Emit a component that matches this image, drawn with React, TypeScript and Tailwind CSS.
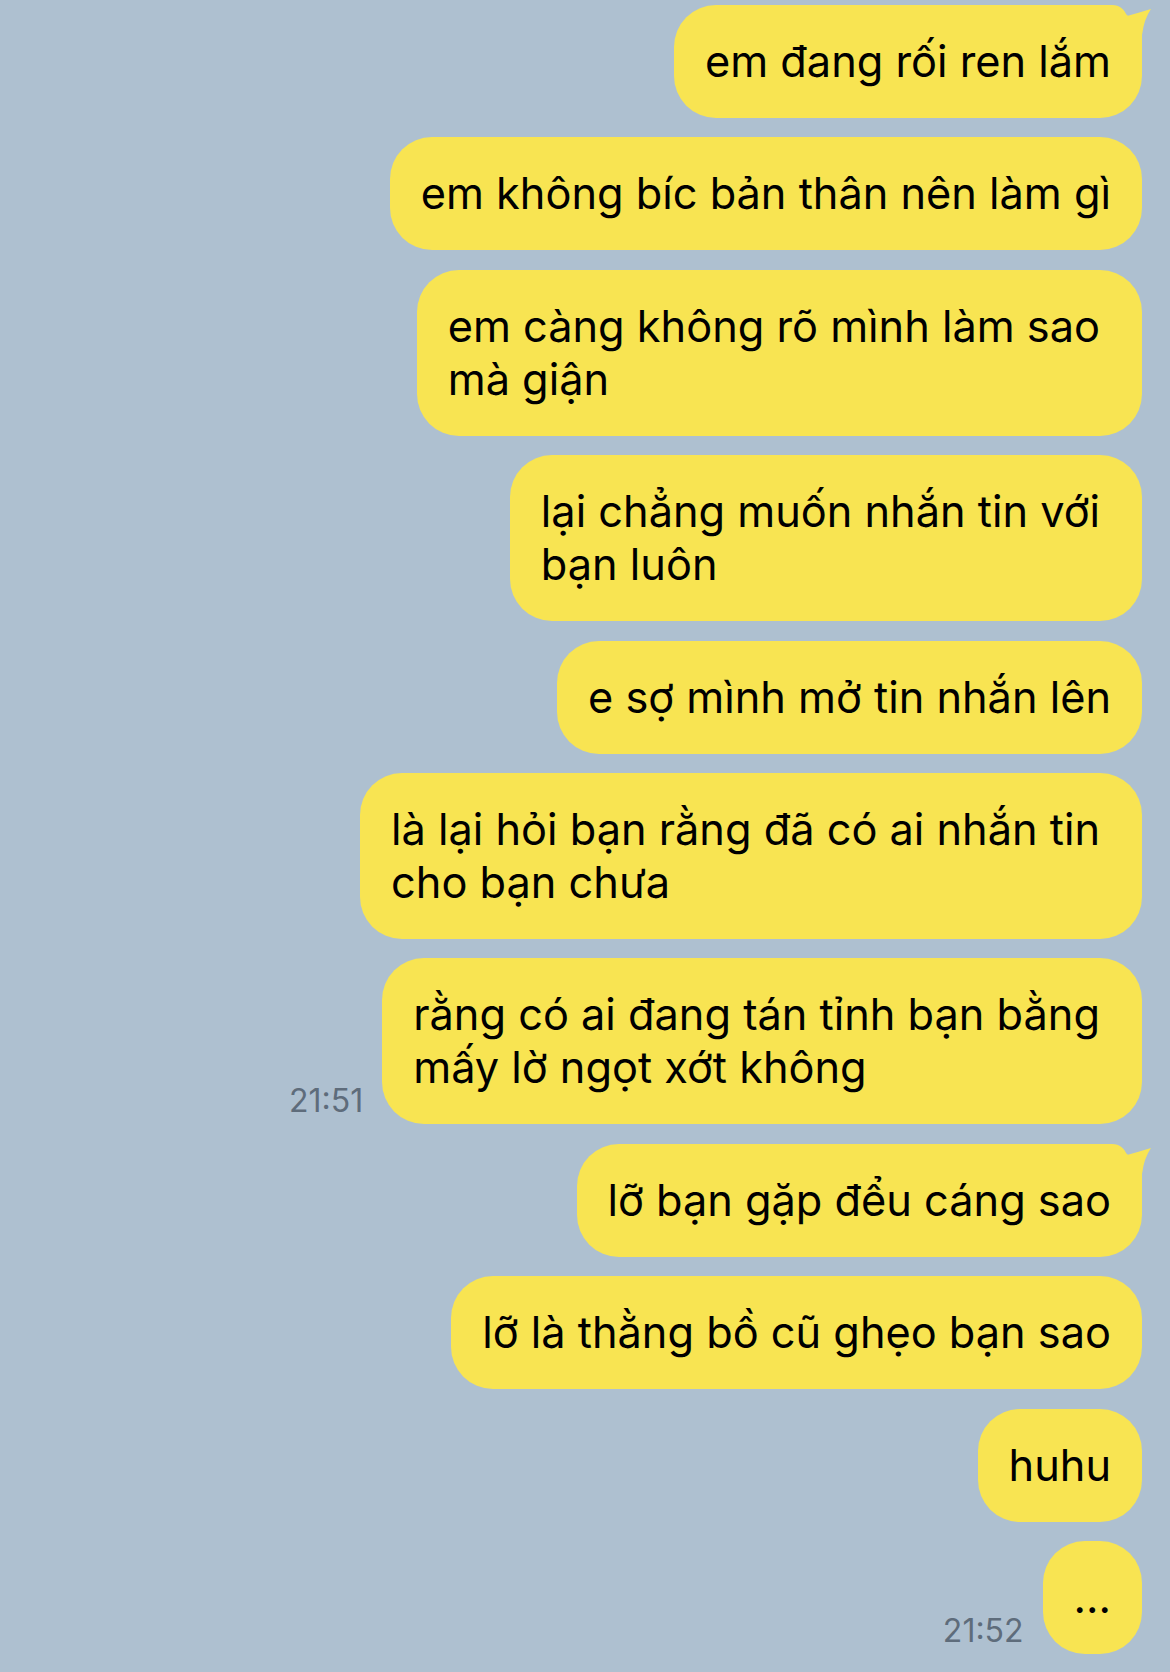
import React from "react";

type Msg = {
  lines: string[];
  tail?: boolean;
  time?: string;
};

const messages: Msg[] = [
  { lines: ["em đang rối ren lắm"], tail: true },
  { lines: ["em không bíc bản thân nên làm gì"] },
  { lines: ["em càng không rõ mình làm sao", "mà giận"] },
  { lines: ["lại chẳng muốn nhắn tin với", "bạn luôn"] },
  { lines: ["e sợ mình mở tin nhắn lên"] },
  { lines: ["là lại hỏi bạn rằng đã có ai nhắn tin", "cho bạn chưa"] },
  { lines: ["rằng có ai đang tán tỉnh bạn bằng", "mấy lờ ngọt xớt không"], time: "21:51" },
  { lines: ["lỡ bạn gặp đểu cáng sao"], tail: true },
  { lines: ["lỡ là thằng bồ cũ ghẹo bạn sao"] },
  { lines: ["huhu"] },
  { lines: ["..."], time: "21:52" },
];

function Tail() {
  return (
    <svg
      className="absolute top-0 right-[-10px] h-[52px] w-[52px]"
      viewBox="0 0 52 52"
      aria-hidden
    >
      <path d="M0 0 L12 0 C20 0 24 4 27 11 Q38 8 51 4 Q44 14 42 30 L42 52 L0 52 Z" fill="#f8e452" />
    </svg>
  );
}

function Bubble({ lines, tail }: Msg) {
  const multi = lines.length > 1;
  return (
    <div
      className={`relative w-fit rounded-[42px] bg-[#f8e452] py-[30px] pl-[31px] text-[43.3px] leading-[53px] text-black ${
        multi ? "pr-[42px]" : "pr-[31px]"
      }`}
    >
      {tail && <Tail />}
      <p className="relative whitespace-nowrap">
        {lines.map((l, i) => (
          <React.Fragment key={i}>
            {i > 0 && <br />}
            {l}
          </React.Fragment>
        ))}
      </p>
    </div>
  );
}

export default function App() {
  return (
    <div
      className="flex h-[1672px] w-full flex-col items-end gap-[19.4px] overflow-hidden bg-[#aec0d0] pt-[5px] pr-[28px]"
      style={{ fontFamily: "Inter, 'Noto Sans', sans-serif" }}
    >
      {messages.map((m, i) => (
        <div key={i} className="flex items-end gap-[19px]">
          {m.time && (
            <span className="mb-[7px] text-[32px] leading-none text-[#5e6c7b]">{m.time}</span>
          )}
          <Bubble {...m} />
        </div>
      ))}
    </div>
  );
}
